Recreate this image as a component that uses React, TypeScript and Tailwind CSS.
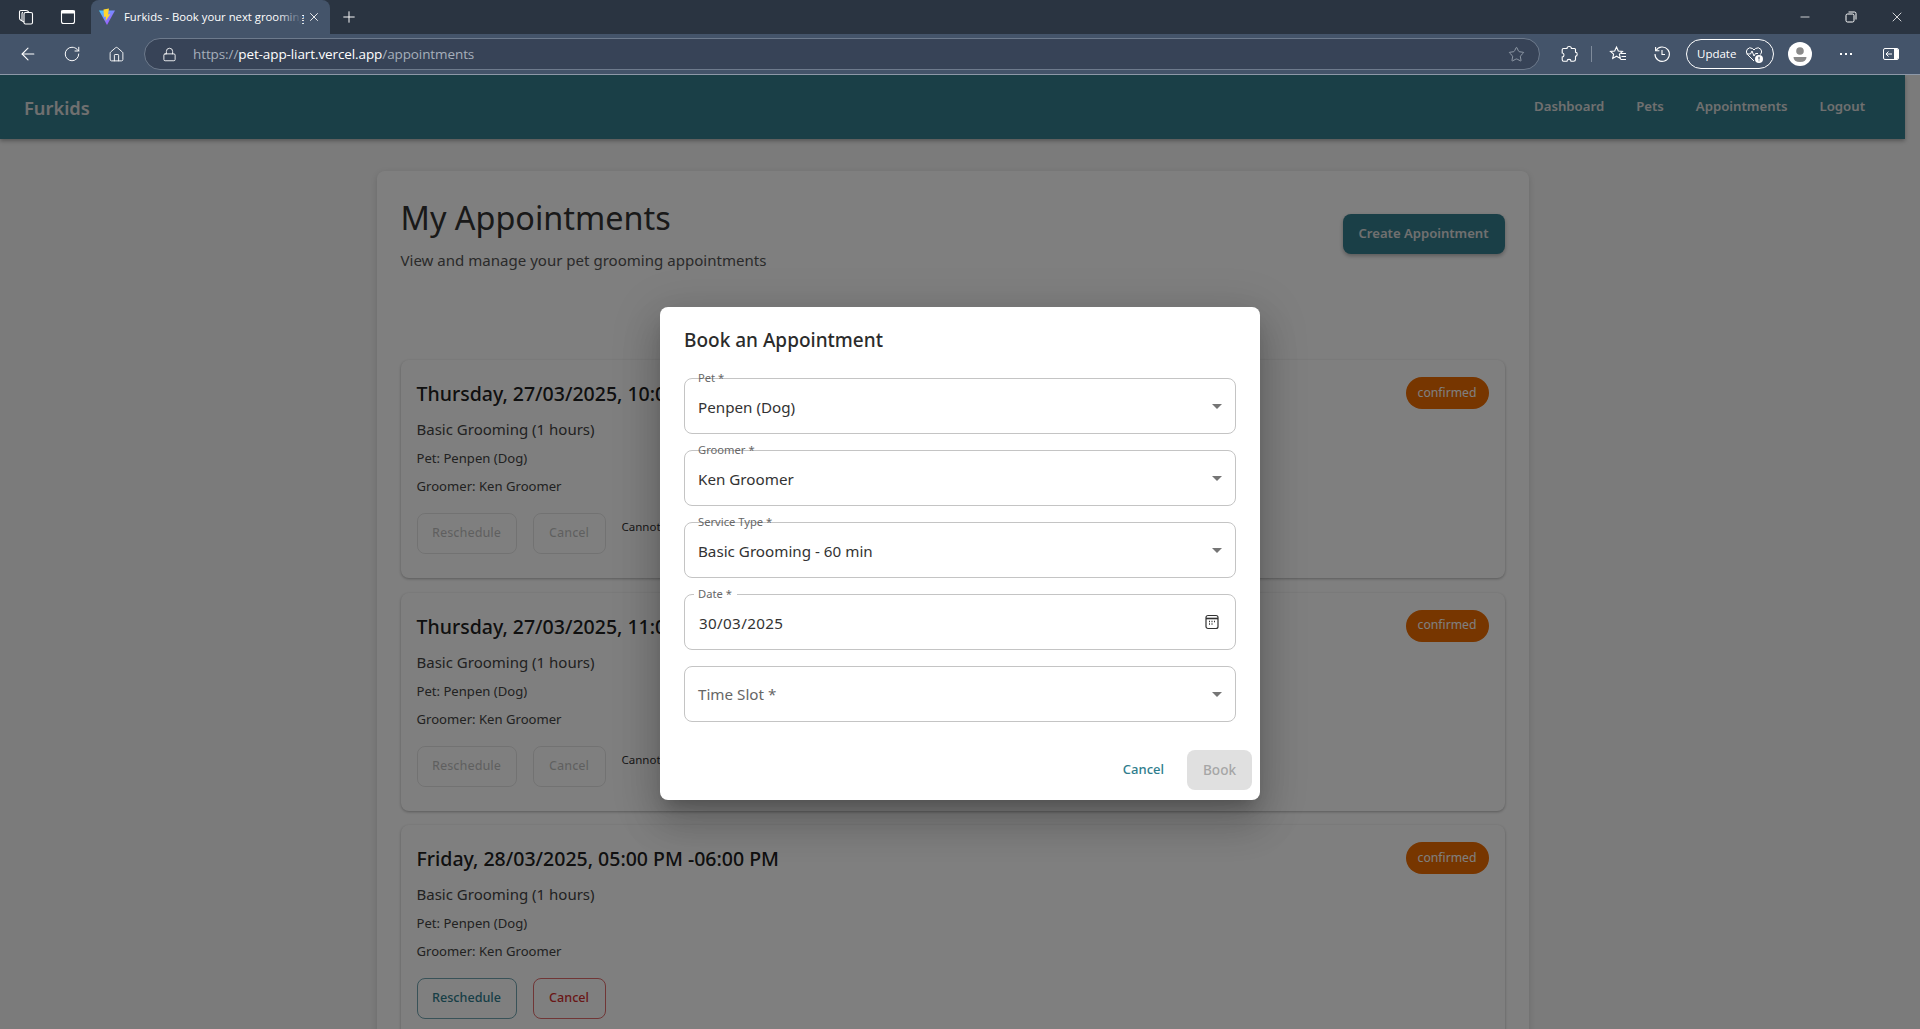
import { ArrowLeft, Home, Lock, Minus, Plus, RotateCw, Star, X } from "lucide-react";
import type { ReactNode } from "react";

const APPOINTMENTS = [
	{ when: "Thursday, 27/03/2025, 10:00 AM -11:00 AM", locked: true },
	{ when: "Thursday, 27/03/2025, 11:00 AM -12:00 PM", locked: true },
	{ when: "Friday, 28/03/2025, 05:00 PM -06:00 PM", locked: false },
];

const NAV_LINKS = ["Dashboard", "Pets", "Appointments", "Logout"];

const IconCell = ({ children, className = "" }: { children: ReactNode; className?: string }) => (
	<div className={`flex h-full w-[44px] shrink-0 items-center justify-center ${className}`}>{children}</div>
);

const ViteIcon = () => (
	<svg width="18" height="18" viewBox="0 0 18 18">
		<defs>
			<linearGradient id="vp" x1="0" y1="0" x2="1" y2="1">
				<stop offset="0" stopColor="#41d1ff" />
				<stop offset="1" stopColor="#bd34fe" />
			</linearGradient>
		</defs>
		<path d="M1 2.5 L17 2.5 L9 17 Z" fill="url(#vp)" />
		<path d="M11 0.5 L5.5 1.6 L6 9 L8 8.6 L7.6 13 L12.4 6 L10 6.4 Z" fill="#ffd62e" />
	</svg>
);

const BrowserChrome = () => (
	<div className="shrink-0 font-['Open_Sans',sans-serif] text-white">
		<div className="flex h-[34px] items-stretch bg-[#2a3441]">
			<IconCell className="ml-[4px]">
				<svg width="18" height="18" viewBox="0 0 18 18" fill="none" stroke="#fff" strokeWidth="1.1">
					<rect x="7" y="4.5" width="8.5" height="11.5" rx="1.5" />
					<path d="M7 14 L3.6 12 Q2.5 11.3 2.5 10 V4 Q2.5 2.4 4 2.5 H9 Q11 2.5 12 4.5" />
					<path d="M5 12.5 V5.5 Q5 4.4 6 4.4" />
				</svg>
			</IconCell>
			<IconCell className="-ml-[2px]">
				<svg width="16" height="16" viewBox="0 0 16 16" fill="none" stroke="#fff" strokeWidth="1.1">
					<rect x="1.5" y="1.5" width="13" height="13" rx="2" />
					<path d="M1.5 4 H14.5 V2 H1.5 Z" fill="#fff" />
				</svg>
			</IconCell>
			<div className="relative ml-[1px] flex h-full w-[239px] items-center rounded-t-[8px] bg-[#44546a] pl-[7px]">
				<ViteIcon />
				<div className="ml-[8px] w-[180px] overflow-hidden text-[11.3px] whitespace-nowrap">
					Furkids - Book your next grooming
				</div>
				<div className="absolute top-0 right-[28px] h-full w-[24px] bg-gradient-to-r from-transparent to-[#44546a]" />
				<X className="absolute right-[9px]" size={14} strokeWidth={1.5} />
			</div>
			<IconCell className="-ml-[3px]">
				<Plus size={18} strokeWidth={1.3} />
			</IconCell>
			<div className="flex-1" />
			<IconCell className="w-[46px]">
				<Minus size={14} strokeWidth={1.3} />
			</IconCell>
			<IconCell className="w-[46px]">
				<svg width="12" height="12" viewBox="0 0 12 12" fill="none" stroke="#fff" strokeWidth="1">
					<rect x="1" y="3" width="8" height="8" rx="1.5" />
					<path d="M3.5 1 H9.5 Q11 1 11 2.5 V8.5" />
				</svg>
			</IconCell>
			<IconCell className="w-[46px]">
				<X size={16} strokeWidth={1.2} />
			</IconCell>
		</div>
		<div className="flex h-[41px] items-center border-b border-[#8d98a8] bg-[#44546a] pl-[6px]">
			<IconCell>
				<ArrowLeft size={20} strokeWidth={1.3} />
			</IconCell>
			<IconCell>
				<RotateCw size={18} strokeWidth={1.3} />
			</IconCell>
			<IconCell>
				<Home size={17} strokeWidth={1.3} />
			</IconCell>
			<div className="ml-[6px] flex h-[32px] flex-1 items-center rounded-full border border-[#6d7a8c] bg-[#374357] pr-[14px] pl-[17px]">
				<Lock size={15} strokeWidth={1.4} />
				<div className="ml-[16px] flex-1 text-[13.5px] tracking-[-0.1px] text-[#a6afbb]">
					https://<span className="text-white">pet-app-liart.vercel.app</span>/appointments
				</div>
				<Star size={17} strokeWidth={1.1} className="text-[#a6afbb]" />
			</div>
			<div className="flex h-full w-[380px] shrink-0 items-center">
				<IconCell className="ml-[7px]">
					<svg width="18" height="18" viewBox="0 0 18 18" fill="none" stroke="#fff" strokeWidth="1.1">
						<path d="M7 3.5 Q7 1.5 9.2 1.5 Q11.4 1.5 11.4 3.5 H14.5 Q15.5 3.5 15.5 4.5 V7.3 Q17.2 7.3 17.2 9.2 Q17.2 11.2 15.5 11.2 V14.5 Q15.5 16.2 13.5 16.2 H11 Q11 14.4 9 14.4 Q7 14.4 7 16.2 H3.5 Q2.2 16.2 2.2 14.5 V12 Q4 12 4 10 Q4 8 2.2 8 V4.8 Q2.2 3.5 3.5 3.5 Z" />
					</svg>
				</IconCell>
				<div className="h-[16px] w-px bg-[#7f8b9b]" />
				<IconCell className="ml-[4px]">
					<svg width="18" height="18" viewBox="0 0 18 18" fill="none" stroke="#fff" strokeWidth="1.1">
						<path d="M7.5 2 L9.3 6 L13.5 6.4 L10.4 9.2 L11.3 13.4 L7.5 11.2 L3.7 13.4 L4.6 9.2 L1.5 6.4 L5.7 6 Z" />
						<path d="M12 8.5 H17 M12.5 11.5 H17 M11.5 14.5 H17" />
					</svg>
				</IconCell>
				<IconCell>
					<svg width="18" height="18" viewBox="0 0 18 18" fill="none" stroke="#fff" strokeWidth="1.1">
						<path d="M3 5.5 A7.2 7.2 0 1 1 2 9" />
						<path d="M2.6 2 V5.8 H6.4" />
						<path d="M9 5 V9.5 H12" />
					</svg>
				</IconCell>
				<div className="ml-[2px] flex h-[30px] w-[88px] shrink-0 items-center rounded-full border border-white pl-[10px] text-[11.5px]">
					Update
					<svg className="ml-[9px]" width="19" height="19" viewBox="0 0 19 19" fill="none" stroke="#fff" strokeWidth="1">
						<path d="M9 16 L2.5 9.5 Q0.5 7 2 4.5 Q4.5 1.5 7.5 3.5 L9 5 L10.5 3.5 Q13.5 1.5 16 4.5 Q17.5 7 15.5 9.5" />
						<path d="M1.5 9 H5.5 L7 6 L9 11 L10.5 8.5 H13" />
						<circle cx="14" cy="14" r="4" fill="#fff" stroke="none" />
						<path d="M14 11.8 V14.6 M14 15.5 V16.2" stroke="#44546a" strokeWidth="1.2" />
					</svg>
				</div>
				<div className="ml-[14px] flex h-[24px] w-[24px] shrink-0 items-center justify-center overflow-hidden rounded-full bg-white">
					<svg width="24" height="24" viewBox="0 0 24 24" fill="#8a8a8a">
						<circle cx="12" cy="9" r="3.8" />
						<path d="M5.5 15 H18.5 Q18.5 20 12 20 Q5.5 20 5.5 15 Z" />
					</svg>
				</div>
				<div className="ml-[22px] flex w-[24px] justify-center gap-[3px]">
					<span className="h-[2px] w-[2px] bg-white" />
					<span className="h-[2px] w-[2px] bg-white" />
					<span className="h-[2px] w-[2px] bg-white" />
				</div>
				<div className="ml-[25px] flex h-[12px] w-[16px] items-center overflow-hidden rounded-[2px] border border-white">
					<div className="flex h-full w-[10px] items-center justify-center">
						<svg width="8" height="8" viewBox="0 0 8 8" stroke="#fff" strokeWidth="1" fill="none">
							<path d="M1 4 H7 M3.5 1.5 L1 4 L3.5 6.5" />
						</svg>
					</div>
					<div className="h-full flex-1 bg-white" />
				</div>
			</div>
		</div>
	</div>
);

const AppointmentCard = ({ when, locked }: { when: string; locked: boolean }) => (
	<div className="relative mb-[14.5px] h-[218px] rounded-[8px] bg-white px-[16px] pt-[18px] shadow-[0_1px_3px_rgba(0,0,0,0.3)]">
		<div className="text-[19.5px] leading-[32px] font-medium text-[#212121]">{when}</div>
		<div className="mt-[7px] text-[15px] leading-[24px] text-[#444]">Basic Grooming (1 hours)</div>
		<div className="mt-[7px] text-[13.1px] leading-[21px] text-[#444]">Pet: Penpen (Dog)</div>
		<div className="mt-[7px] text-[13.1px] leading-[21px] text-[#444]">Groomer: Ken Groomer</div>
		<div className="mt-[16px] flex items-start gap-[16px]">
			<button
				type="button"
				className={`h-[41px] w-[100px] rounded-[8px] border text-[12.6px] font-medium ${
					locked ? "border-black/10 text-black/25" : "border-[#347e8e]/70 text-[#2f7d8d]"
				}`}
			>
				Reschedule
			</button>
			<button
				type="button"
				className={`h-[41px] w-[73px] rounded-[8px] border text-[12.6px] font-medium ${
					locked ? "border-black/10 text-black/25" : "border-[#d32f2f]/70 text-[#d32f2f]"
				}`}
			>
				Cancel
			</button>
			{locked && <span className="text-[11.5px] leading-[28px] text-[#333]">Cannot modify appointments within 24 hours</span>}
		</div>
		<span className="absolute top-[17px] right-[16px] flex h-[32px] w-[83px] items-center justify-center rounded-full bg-[#ef6c00] text-[12.2px] text-white">
			confirmed
		</span>
	</div>
);

const Field = ({ label, value, date }: { label?: string; value: string; date?: boolean }) => (
	<div
		className={`relative mb-[16px] flex h-[56px] items-center rounded-[8px] border border-[#c4c4c4] pr-[12px] pl-[13px] text-[15.2px] ${
			label ? "text-[#333]" : "text-[#666]"
		}`}
	>
		{label && (
			<span className={`absolute -top-[9px] left-[9px] px-[4px] text-[11.2px] leading-[16px] text-[#666] ${date ? "bg-white pr-[5px]" : ""}`}>
				{label}
			</span>
		)}
		<span className={`flex-1 ${label ? "pt-[3px]" : "pt-[1px]"} ${date ? "pl-[1px] tracking-[0.35px]" : ""}`}>{value}</span>
		{date ? (
			<svg width="18" height="18" viewBox="0 0 18 18" fill="none" stroke="#333" strokeWidth="1.2" className="mr-[2px]">
				<rect x="3" y="2.5" width="12" height="13" rx="2" />
				<path d="M3 5.5 H15" strokeWidth="1.6" />
				<path d="M6 8.5 H7 M8.5 8.5 H9.5 M11 8.5 H12 M6 11 H7 M8.5 11 H9.5" strokeWidth="1.4" />
			</svg>
		) : (
			<svg width="10" height="5" viewBox="0 0 10 5" fill="#757575" className="mr-[1px]">
				<path d="M0 0 H10 L5 5 Z" />
			</svg>
		)}
	</div>
);

const BookDialog = () => (
	<div className="absolute inset-0 flex items-center justify-center bg-black/50 pt-[3px]">
		<div className="h-[493px] w-[600px] rounded-[8px] bg-white shadow-[0_11px_15px_-7px_rgba(0,0,0,0.2),0_24px_38px_3px_rgba(0,0,0,0.14),0_9px_46px_8px_rgba(0,0,0,0.12)]">
			<div className="px-[24px] pt-[17px] pb-[22px] text-[19px] leading-[32px] font-medium text-[#2b2b2b]">Book an Appointment</div>
			<div className="px-[24px]">
				<Field label="Pet *" value="Penpen (Dog)" />
				<Field label="Groomer *" value="Ken Groomer" />
				<Field label="Service Type *" value="Basic Grooming - 60 min" />
				<Field label="Date *" value="30/03/2025" date />
				<Field value="Time Slot *" />
			</div>
			<div className="mt-[28px] flex items-center justify-end pr-[8px]">
				<span className="mr-[23px] text-[13px] font-medium text-[#2f7d8d]">Cancel</span>
				<button type="button" className="h-[40px] w-[65px] rounded-[8px] bg-[#e0e0e0] text-[13.6px] font-medium text-[#a6a6a6]">
					Book
				</button>
			</div>
		</div>
	</div>
);

export default function App() {
	return (
		<div className="flex h-[1029px] w-[1920px] flex-col overflow-hidden font-['Noto_Sans',sans-serif]">
			<BrowserChrome />
			<div className="relative min-h-0 flex-1 overflow-hidden bg-[#f6f6f6]">
				<div className="w-[1905px]">
					<header className="flex h-[64px] items-center justify-between bg-[#347e8e] pr-[40px] pl-[24px] shadow-[0_2px_4px_rgba(0,0,0,0.3)]">
						<span className="pt-[1px] text-[18.3px] font-semibold text-[#e0e0e0]">Furkids</span>
						<nav className="flex gap-[32px] text-[13.2px] font-semibold text-[#e0e0e0]">
							{NAV_LINKS.map((link) => (
								<span key={link}>{link}</span>
							))}
						</nav>
					</header>
					<main className="mx-auto mt-[32px] w-[1152px] rounded-[8px] bg-white px-[24px] pt-[24px] shadow-[0_2px_6px_rgba(0,0,0,0.15)]">
						<div className="flex h-[165px] items-start justify-between">
							<div>
								<h1 className="-mt-[1px] text-[32.4px] leading-[46px] text-[#333]">My Appointments</h1>
								<p className="mt-[8px] text-[15.05px] leading-[24px] text-[#555]">View and manage your pet grooming appointments</p>
							</div>
							<button
								type="button"
								className="mt-[19px] h-[40px] w-[162px] rounded-[8px] bg-[#347e8e] text-[13.1px] font-semibold text-[#e0e0e0] shadow-[0_2px_4px_rgba(0,0,0,0.3)]"
							>
								Create Appointment
							</button>
						</div>
						{APPOINTMENTS.map((item) => (
							<AppointmentCard key={item.when} when={item.when} locked={item.locked} />
						))}
					</main>
				</div>
				<BookDialog />
			</div>
		</div>
	);
}
